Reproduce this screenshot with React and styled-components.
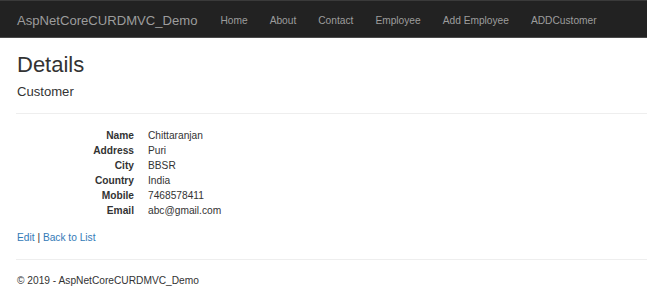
import React from 'react';
import styled, { createGlobalStyle } from 'styled-components';

const Global = createGlobalStyle`
    html, body {
        margin: 0;
        padding: 0;
        background: #fff;
    }
    body {
        font-family: "Liberation Sans", Arial, sans-serif;
        font-size: 10.2px;
        line-height: 14.6px;
        color: #333;
    }
`

const Navbar = styled.nav`
    height: 38px;
    background: #222;
    border-top: 1px solid #3a3a3a;
    border-bottom: 1px solid #4a4a4a;
    display: flex;
    align-items: center;
    padding: 4px 0 0 17px;
    box-sizing: border-box;
`
const Brand = styled.a`
    font-size: 13.1px;
    color: #9d9d9d;
    text-decoration: none;
    padding-right: 12px;
`
const NavList = styled.ul`
    display: flex;
    list-style: none;
    margin: 0;
    padding: 0;
`
const NavLink = styled.a`
    display: block;
    padding: 0 11px;
    color: #9d9d9d;
    text-decoration: none;
    font-size: 10.2px;
`

const Container = styled.div`
    padding-left: 16px;
`
const H2 = styled.h2`
    font-size: 22px;
    font-weight: 400;
    line-height: 1.1;
    margin: 15px 0 7.5px 1px;
`
const H4 = styled.h4`
    font-size: 13.1px;
    font-weight: 400;
    line-height: 1.1;
    margin: 0 0 13.5px 1px;
`
const Hr = styled.hr`
    border: 0;
    border-top: 1px solid #eee;
    margin: 0;
`
const Dl = styled.dl`
    display: grid;
    grid-template-columns: 117px auto;
    column-gap: 14px;
    line-height: 15px;
    margin: 14px 0 13.5px 1px;
`
const Dt = styled.dt`
    font-weight: 700;
    text-align: right;
`
const Dd = styled.dd`
    margin: 0;
`
const Actions = styled.p`
    margin: 0 0 13.5px 1px;
`
const Link = styled.a`
    color: #337ab7;
    text-decoration: none;
`
const Footer = styled.footer`
    padding-top: 13.5px;
    p { margin: 0 0 0 1px; }
`

const fields = [
    ['Name', 'Chittaranjan'],
    ['Address', 'Puri'],
    ['City', 'BBSR'],
    ['Country', 'India'],
    ['Mobile', '7468578411'],
    ['Email', 'abc@gmail.com'],
];

const links = ['Home', 'About', 'Contact', 'Employee', 'Add Employee', 'ADDCustomer'];

const App = () => (
    <>
        <Global />
        <Navbar>
            <Brand href="#">AspNetCoreCURDMVC_Demo</Brand>
            <NavList>
                {links.map(l => <li key={l}><NavLink href="#">{l}</NavLink></li>)}
            </NavList>
        </Navbar>
        <Container>
            <H2>Details</H2>
            <div>
                <H4>Customer</H4>
                <Hr />
                <Dl>
                    {fields.map(([k, v]) => (
                        <React.Fragment key={k}>
                            <Dt>{k}</Dt>
                            <Dd>{v}</Dd>
                        </React.Fragment>
                    ))}
                </Dl>
            </div>
            <Actions>
                <Link href="#">Edit</Link> | <Link href="#">Back to List</Link>
            </Actions>
            <Hr />
            <Footer>
                <p>© 2019 - AspNetCoreCURDMVC_Demo</p>
            </Footer>
        </Container>
    </>
);

export default App;
